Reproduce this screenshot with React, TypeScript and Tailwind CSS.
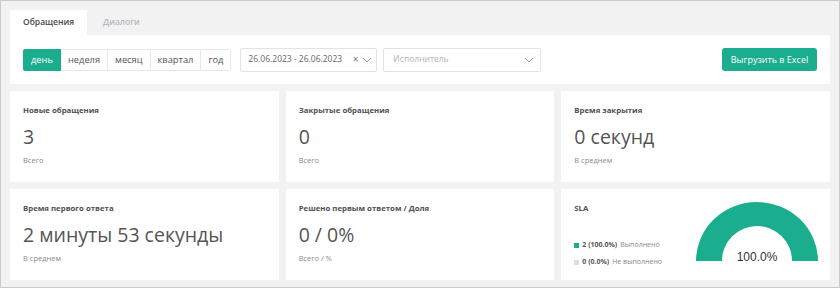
import React from 'react';

const GREEN = 'bg-[#1aae8e]';

const Chevron: React.FC<{ className?: string }> = ({ className }) => (
  <svg className={className} width="10" height="6" viewBox="0 0 10 6" fill="none">
    <path d="M1 1l4 4 4-4" stroke="#9a9a9a" strokeWidth="1" />
  </svg>
);

const StatCard: React.FC<{ title: string; value: string; sub: string }> = ({ title, value, sub }) => (
  <div className="bg-white h-[91px] pl-[13px] pt-[13px]">
    <div className="text-[7.8px] leading-[12px] font-bold text-[#505050]">{title}</div>
    <div className="mt-[8px] text-[19.5px] leading-[26px] text-[#555]">{value}</div>
    <div className="mt-[4px] text-[7.5px] leading-[12px] text-[#8a8a8a]">{sub}</div>
  </div>
);

const SlaCard: React.FC = () => (
  <div className="bg-white h-[91px] pl-[13px] pt-[13px] flex items-start overflow-hidden">
    <div className="flex-1">
      <div className="text-[7.8px] leading-[12px] font-bold text-[#505050]">SLA</div>
      <div className="mt-[25px] flex flex-col gap-[5px] text-[7px] leading-[12px]">
        <div className="flex items-center gap-[3px]">
          <span className={`w-[5px] h-[5px] ${GREEN}`} />
          <span className="font-bold text-[#555]">2 (100.0%)</span>
          <span className="text-[#888]">Выполнено</span>
        </div>
        <div className="flex items-center gap-[3px]">
          <span className="w-[5px] h-[5px] bg-[#dedede]" />
          <span className="font-bold text-[#555]">0 (0.0%)</span>
          <span className="text-[#888]">Не выполнено</span>
        </div>
      </div>
    </div>
    <svg
      width="124"
      height="62"
      viewBox="0 0 124 62"
      className="block w-[124px] h-[62px] shrink-0 mt-[-1px] mr-[11px]"
    >
      <path d="M 1 60 A 61 59 0 0 1 123 60 L 97 60 A 35 35 0 0 0 27 60 Z" fill="#1aae8e" />
      <text x="62" y="60" textAnchor="middle" fontFamily="'Liberation Sans', Arial, sans-serif" fontSize="12" fill="#333">
        100.0%
      </text>
    </svg>
  </div>
);

export default function App() {
  const periods = ['день', 'неделя', 'месяц', 'квартал', 'год'];
  return (
    <div
      className="w-[840px] h-[288px] border border-[#cccccc] bg-[#f2f2f2] pt-[9px] px-[9px]"
      style={{ fontFamily: "'Open Sans', 'Noto Sans', sans-serif" }}
    >
      {/* Tabs */}
      <div className="flex h-[25px] items-stretch">
        <div className="bg-white w-[77px] pl-[13px] flex items-center text-[8.5px] font-semibold text-[#4a4a4a]">Обращения</div>
        <div className="pl-[16px] flex items-center text-[8.5px] font-semibold text-[#b3bac6]">Диалоги</div>
      </div>

      {/* Filters */}
      <div className="bg-white h-[49px] px-[13px] flex items-center">
        <div className="flex h-[22px] text-[9.3px]">
          {periods.map((p, i) => (
            <div
              key={p}
              className={
                i === 0
                  ? `${GREEN} text-white px-[8px] flex items-center rounded-l-[2px]`
                  : 'border border-l-0 border-[#e8e8e8] text-[#555] px-[7px] flex items-center last:rounded-r-[2px]'
              }
            >
              {p}
            </div>
          ))}
        </div>
        <div className="ml-[9px] w-[137px] h-[24px] border border-[#e3e3e3] rounded-[2px] flex items-center pl-[7px] pr-[4px] text-[8.5px] text-[#666] whitespace-nowrap">
          <span className="flex-1">26.06.2023 - 26.06.2023</span>
          <span className="text-[#777] text-[10px] mr-[4px]">×</span>
          <Chevron />
        </div>
        <div className="ml-[6px] w-[158px] h-[24px] border border-[#e3e3e3] rounded-[2px] flex items-center pl-[9px] pr-[6px] text-[8.5px] text-[#b5b5b5]">
          <span className="flex-1">Исполнитель</span>
          <Chevron />
        </div>
        <div className="ml-auto">
          <div className={`${GREEN} h-[23px] w-[95px] rounded-[3px] flex items-center justify-center text-[9px] text-white`}>
            Выгрузить в Excel
          </div>
        </div>
      </div>

      {/* Cards */}
      <div className="mt-[7px] grid grid-cols-3 gap-[7px]">
        <StatCard title="Новые обращения" value="3" sub="Всего" />
        <StatCard title="Закрытые обращения" value="0" sub="Всего" />
        <StatCard title="Время закрытия" value="0 секунд" sub="В среднем" />
        <StatCard title="Время первого ответа" value="2 минуты 53 секунды" sub="В среднем" />
        <StatCard title="Решено первым ответом / Доля" value="0 / 0%" sub="Всего / %" />
        <SlaCard />
      </div>
    </div>
  );
}
